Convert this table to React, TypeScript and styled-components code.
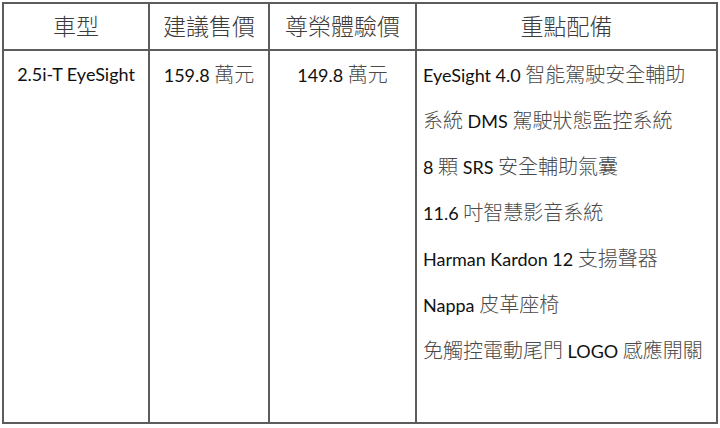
import React from 'react';
import styled, { createGlobalStyle } from 'styled-components';

const GlobalStyle = createGlobalStyle`
  html, body {
    margin: 0;
    padding: 0;
    background: #fff;
  }
`;

interface Spec {
  model: string;
  price: string;
  special: string;
  features: string[];
}

const spec: Spec = {
  model: '2.5i-T EyeSight',
  price: '159.8',
  special: '149.8',
  features: [
    'EyeSight 4.0 智能駕駛安全輔助',
    '系統 DMS 駕駛狀態監控系統',
    '8 顆 SRS 安全輔助氣囊',
    '11.6 吋智慧影音系統',
    'Harman Kardon 12 支揚聲器',
    'Nappa 皮革座椅',
    '免觸控電動尾門 LOGO 感應開關',
  ],
};

// 中日韓字用較大字級、較淺色，拉丁字用較小字級
const splitHan = (text: string) =>
  text.split(/([\u3000-\u9fff\uff00-\uffef]+)/).filter(Boolean).map((part, i) =>
    /[\u3000-\u9fff]/.test(part) ? <Han key={i}>{part}</Han> : <span key={i}>{part}</span>
  );

const App: React.FC = () => {
  return (
    <>
      <GlobalStyle />
      <Page>
        <Table>
          <colgroup>
            <col style={{ width: 146 }} />
            <col style={{ width: 120 }} />
            <col style={{ width: 147 }} />
            <col />
          </colgroup>
          <thead>
            <tr>
              <Th>車型</Th>
              <Th>建議售價</Th>
              <Th>尊榮體驗價</Th>
              <Th>重點配備</Th>
            </tr>
          </thead>
          <tbody>
            <tr>
              <Td $center>
                <Line>{spec.model}</Line>
              </Td>
              <Td $center>
                <Line>{splitHan(`${spec.price} 萬元`)}</Line>
              </Td>
              <Td $center>
                <Line>{splitHan(`${spec.special} 萬元`)}</Line>
              </Td>
              <Td>
                {spec.features.map((f) => (
                  <Line key={f}>{splitHan(f)}</Line>
                ))}
              </Td>
            </tr>
          </tbody>
        </Table>
      </Page>
    </>
  );
};

const Page = styled.div`
  width: 720px;
  height: 428px;
  padding: 2px 0 0 2px;
  box-sizing: border-box;
`;

const Table = styled.table`
  width: 716px;
  height: 422px;
  border-collapse: collapse;
  table-layout: fixed;
  border-top: 2px solid #111;
  border-left: 2px solid #111;
  font-family: 'Lato', 'Noto Sans CJK TC', sans-serif;
  color: #000;
`;

const Th = styled.th`
  height: 41px;
  padding: 0 0 4px;
  border: 2px solid #5c5c5c;
  font-family: 'Noto Sans CJK TC', sans-serif;
  font-size: 23px;
  font-weight: 300;
  color: #3c3c3c;
  text-align: center;
  vertical-align: middle;
`;

const Td = styled.td<{ $center?: boolean }>`
  padding: 0 0 0 ${(p) => (p.$center ? 0 : 6)}px;
  border: 2px solid #5c5c5c;
  vertical-align: top;
  text-align: ${(p) => (p.$center ? 'center' : 'left')};
`;

const Line = styled.div`
  height: 46px;
  line-height: 46px;
  font-size: 18px;
  white-space: nowrap;
  color: #111;
`;

const Han = styled.span`
  font-family: 'Noto Sans CJK TC', sans-serif;
  font-size: 20px;
  font-weight: 300;
  color: #4a4a4a;
`;

export default App;
